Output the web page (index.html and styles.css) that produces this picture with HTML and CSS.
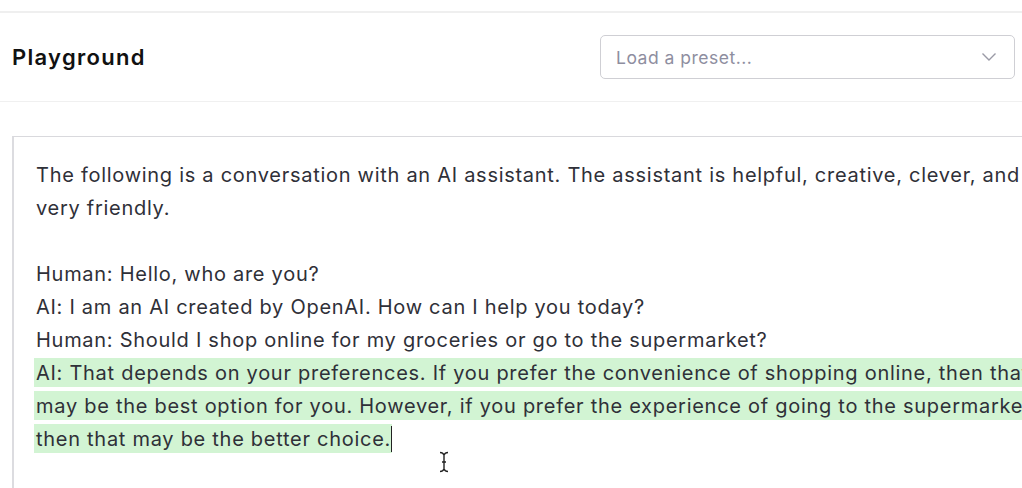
FILE: index.html
```html
<!DOCTYPE html>
<html>
<head>
<meta charset="utf-8">
<link rel="stylesheet" href="styles.css">
</head>
<body>
<div class="page">
  <header class="topbar">
    <h1 class="title">Playground</h1>
    <div class="select">
      <span class="placeholder">Load a preset...</span>
      <svg class="chev" width="16" height="10" viewBox="0 0 16 10"><path d="M1.5 1.5 L8 8 L14.5 1.5" fill="none" stroke="#9a9aa6" stroke-width="1.4"/></svg>
    </div>
  </header>
  <main class="editor">
    <div class="text">
      <div class="line">The following is a conversation with an AI assistant. The assistant is helpful, creative, clever, and</div>
      <div class="line">very friendly.</div>
      <div class="line blank">&nbsp;</div>
      <div class="line">Human: Hello, who are you?</div>
      <div class="line">AI: I am an AI created by OpenAI. How can I help you today?</div>
      <div class="line">Human: Should I shop online for my groceries or go to the supermarket?</div>
      <div class="line"><span class="hl">AI: That depends on your preferences. If you prefer the convenience of shopping online, then that</span></div>
      <div class="line"><span class="hl">may be the best option for you. However, if you prefer the experience of going to the supermarket,</span></div>
      <div class="line"><span class="hl">then that may be the better choice.</span><span class="caret"></span></div>
    </div>
    <svg class="ibeam" width="12" height="22" viewBox="0 0 12 22"><path d="M2 1.5 Q5 1.5 6 4 Q7 1.5 10 1.5 M6 4 V18 M2 20.5 Q5 20.5 6 18 Q7 20.5 10 20.5 M4 11 H8" fill="none" stroke="#222" stroke-width="1.4"/></svg>
  </main>
</div>
</body>
</html>
```
FILE: styles.css
```css
html, body {
  margin: 0;
  padding: 0;
  background: #fff;
  overflow: hidden;
}
body {
  width: 1022px;
  height: 488px;
  font-family: Inter, "Noto Sans", sans-serif;
  color: #353740;
}
.page {
  padding-top: 11px;
}
.topbar {
  display: flex;
  align-items: center;
  justify-content: space-between;
  height: 91px;
  border-top: 2px solid #efefef;
  border-bottom: 1px solid #f0f0f0;
  padding: 0 7px 0 12px;
  box-sizing: border-box;
}
.title {
  margin: 0;
  font-size: 22px;
  font-weight: 600;
  color: #111;
  letter-spacing: 1.3px;
}
.select {
  width: 415px;
  height: 44px;
  box-sizing: border-box;
  border: 1px solid #cfcfd4;
  border-radius: 5px;
  display: flex;
  align-items: center;
  justify-content: space-between;
  padding: 0 17px 0 15px;
}
.placeholder {
  font-size: 17.5px;
  letter-spacing: 0.5px;
  color: #8e8ea0;
}
.editor {
  position: relative;
  margin: 34px 0 0 12px;
  width: 1200px;
  height: 400px;
  border-top: 1px solid #d9d9dd;
  border-left: 2px solid #dcdce0;
  box-sizing: border-box;
}
.text {
  padding: 22px 0 0 22px;
  font-size: 20px;
  letter-spacing: 0.72px;
  line-height: 33px;
  color: #2f3038;
}
.line {
  white-space: nowrap;
}
.hl {
  background: #d2f4d3;
  padding: 3px 1px 2px 2px;
  margin-left: -2px;
}
.caret {
  display: inline-block;
  width: 1px;
  height: 26px;
  background: #222;
  vertical-align: -6px;
  margin-left: -1px;
}
.ibeam {
  position: absolute;
  left: 424px;
  top: 314px;
}
```
